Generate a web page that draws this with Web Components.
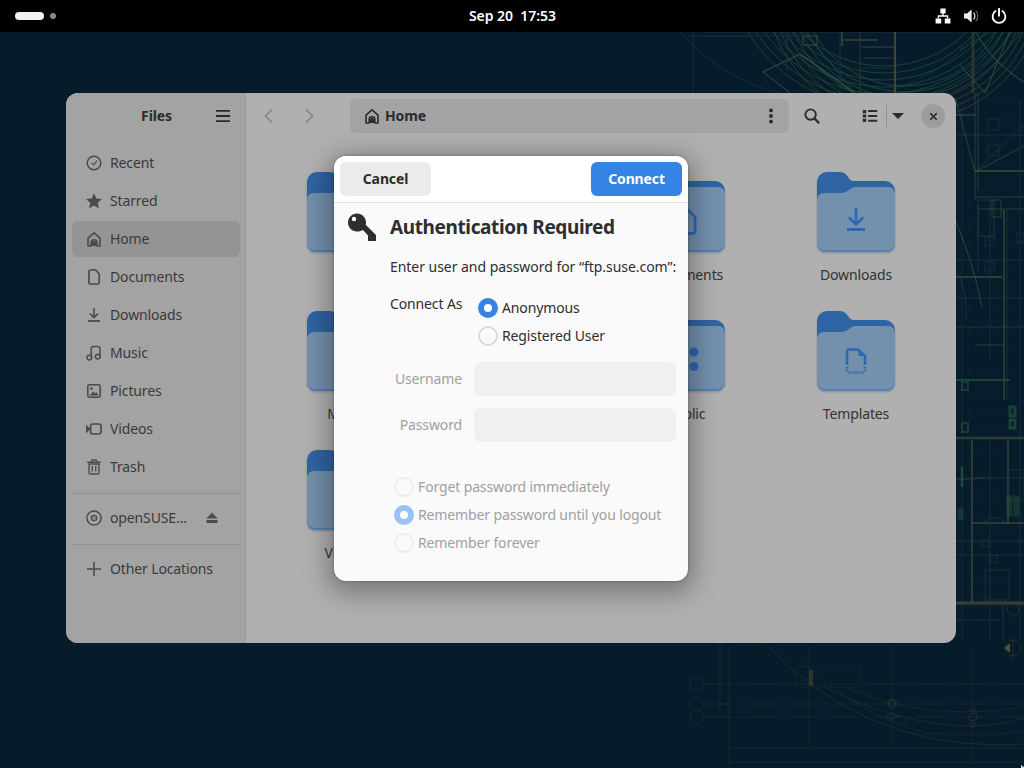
<!DOCTYPE html>
<html><head><meta charset="utf-8"><title>Files</title>
<style>
html,body{margin:0;padding:0;background:#061c2b}
body{font:14px "Noto Sans","Open Sans",sans-serif;letter-spacing:-.13px;width:1024px;height:768px;overflow:hidden}
</style></head><body>
<gnome-desk>
  <wall-paper></wall-paper>
  <top-bar></top-bar>
  <files-window>
    <side-row slot="nav" icon="recent">Recent</side-row>
    <side-row slot="nav" icon="star">Starred</side-row>
    <side-row slot="nav" icon="home" selected>Home</side-row>
    <side-row slot="nav" icon="doc">Documents</side-row>
    <side-row slot="nav" icon="down">Downloads</side-row>
    <side-row slot="nav" icon="music">Music</side-row>
    <side-row slot="nav" icon="pic">Pictures</side-row>
    <side-row slot="nav" icon="video">Videos</side-row>
    <side-row slot="nav" icon="trash">Trash</side-row>
    <side-sep slot="nav"></side-sep>
    <side-row slot="nav" icon="disc" eject>openSUSE…</side-row>
    <side-sep slot="nav"></side-sep>
    <side-row slot="nav" icon="plus">Other Locations</side-row>

    <folder-item></folder-item>
    <folder-item></folder-item>
    <folder-item emblem="doc">Documents</folder-item>
    <folder-item emblem="down">Downloads</folder-item>
    <folder-item>Music</folder-item>
    <folder-item></folder-item>
    <folder-item emblem="share">Public</folder-item>
    <folder-item emblem="tmpl">Templates</folder-item>
    <folder-item>Videos</folder-item>
  </files-window>
  <auth-dialog></auth-dialog>
</gnome-desk>
<script>
const ICONS={
recent:'<circle cx="8" cy="8" r="6.800" fill="none" stroke="currentColor" stroke-width="1.500"/><path d="M5.400 8.400 8 9.600l3-4" fill="none" stroke="currentColor" stroke-width="1.200"/>',
star:'<path d="M8 .3l2.300 5.300 5.700.5-4.300 3.800 1.300 5.600L8 12.600l-5 2.900 1.300-5.600L0 6.100l5.700-.5z" fill="currentColor"/>',
home:'<path d="M2 15V7.200L8 1.800l6 5.400V15h-3.200v-3.800c0-1.300-1.200-2.400-2.800-2.400s-2.800 1.100-2.800 2.400V15z" fill="none" stroke="currentColor" stroke-width="1.600" stroke-linejoin="round"/><path d="M6 15v-3.500c0-.9.9-1.500 2-1.500s2 .6 2 1.500V15z" fill="currentColor"/>',
doc:'<path d="M3 2.600C3 1.700 3.700 1 4.600 1H9.600L13.200 4.800V13.400c0 .9-.7 1.600-1.600 1.600H4.600C3.700 15 3 14.300 3 13.400z" fill="none" stroke="currentColor" stroke-width="1.700" stroke-linejoin="round"/>',
down:'<path d="M8 1v9M4 6.600 8 10.600 12 6.600" fill="none" stroke="currentColor" stroke-width="1.600"/><path d="M2 14h12" stroke="currentColor" stroke-width="1.800"/>',
music:'<circle cx="3.400" cy="12.600" r="2.400" fill="none" stroke="currentColor" stroke-width="1.500"/><circle cx="11.800" cy="11.600" r="2.400" fill="none" stroke="currentColor" stroke-width="1.500"/><path d="M5.200 12.600V4c0-1.600 1-2.600 2.600-2.600h4c1.400 0 2.200.8 2.200 2.200v8" fill="none" stroke="currentColor" stroke-width="1.500"/>',
pic:'<rect x="1.800" y="1.800" width="12.400" height="12.400" rx="1.600" fill="none" stroke="currentColor" stroke-width="1.600"/><circle cx="5.400" cy="5.600" r="1.400" fill="currentColor"/><path d="M3.400 12.400 7.400 8.400 9.400 10.400 10.600 9.200 12.600 12.400z" fill="currentColor"/>',
video:'<rect x="4.600" y="3" width="10.400" height="10" rx="2.200" fill="none" stroke="currentColor" stroke-width="1.700"/><path d="M0 3.600 4.400 8 0 12.400z" fill="currentColor"/>',
trash:'<path d="M3 5v8.400c0 .9.7 1.600 1.600 1.600h6.800c.9 0 1.600-.7 1.600-1.600V5z M1.200 3.200h13.600 M5.400 3V2c0-.6.4-1 1-1h3.200c.6 0 1 .4 1 1v1 M6.300 7v5.400 M9.700 7v5.400" fill="none" stroke="currentColor" stroke-width="1.400"/>',
disc:'<circle cx="8" cy="8" r="7.100" fill="none" stroke="currentColor" stroke-width="1.500"/><circle cx="8" cy="8" r="2.600" fill="none" stroke="currentColor" stroke-width="1.400"/><circle cx="8" cy="8" r=".8" fill="currentColor"/>',
plus:'<path d="M8 1v14M1 8h14" stroke="currentColor" stroke-width="1.600" fill="none"/>',
eject:'<path d="M8 1.600 14.400 8.600H1.600z" fill="currentColor"/><rect x="1.600" y="10.400" width="12.800" height="3.400" rx=".8" fill="currentColor"/>',
menu:'<path d="M1 2.800h14M1 8h14M1 13.200h14" stroke="currentColor" stroke-width="1.800"/>',
left:'<path d="M11 1.400 4.400 8l6.600 6.600" fill="none" stroke="currentColor" stroke-width="1.700"/>',
right:'<path d="M5 1.400 11.600 8 5 14.600" fill="none" stroke="currentColor" stroke-width="1.700"/>',
dots:'<circle cx="8" cy="2.400" r="1.900" fill="currentColor"/><circle cx="8" cy="8" r="1.900" fill="currentColor"/><circle cx="8" cy="13.600" r="1.900" fill="currentColor"/>',
search:'<circle cx="6.600" cy="6.600" r="5.200" fill="none" stroke="currentColor" stroke-width="1.900"/><path d="M10.400 10.400 15.200 15.200" stroke="currentColor" stroke-width="2.200"/>',
list:'<path d="M.8 2h3.400v3.200H.8zM.8 6.400h3.400v3.200H.8zM.8 10.800h3.400V14H.8z" fill="currentColor"/><path d="M6.200 3h9M6.200 8h9M6.200 12.800h9" stroke="currentColor" stroke-width="1.900"/>',
tri:'<path d="M2 5h12L8 11z" fill="currentColor"/>',
close:'<path d="M4 4l8 8M12 4l-8 8" stroke="currentColor" stroke-width="2.100" fill="none"/>',
net:'<path d="M5.400.6h5.200v4.800H5.400zM.6 10.400h5.600v5H.6zM9.800 10.400h5.600v5H9.800z" fill="currentColor"/><path d="M8 5v3M3.400 10.600V8h9.200v2.600" fill="none" stroke="currentColor" stroke-width="1.300"/>',
vol:'<path d="M1 5.400h3L8.600 1.600v12.800L4 10.600H1z" fill="currentColor"/><path d="M10.600 4.600c1.400 2 1.400 4.800 0 6.800" fill="none" stroke="currentColor" stroke-width="1.400" opacity=".85"/><path d="M13 2.800c2.200 3 2.200 7.400 0 10.400" fill="none" stroke="currentColor" stroke-width="1.400" opacity=".4"/>',
power:'<path d="M8 .8v7" stroke="currentColor" stroke-width="1.900" stroke-linecap="round"/><path d="M4.600 3.100a6.400 6.400 0 1 0 6.800 0" fill="none" stroke="currentColor" stroke-width="1.800" stroke-linecap="round"/>'
};
function mk(name,html,extra){
  const t=document.createElement('template');t.innerHTML=html;
  customElements.define(name,class extends HTMLElement{
    constructor(){super();this.attachShadow({mode:'open'}).appendChild(t.content.cloneNode(true));}
    connectedCallback(){extra&&extra.call(this,this.shadowRoot)}
  });
}
mk('sym-icon','<style>:host{display:inline-flex;flex:none;width:16px;height:16px}svg{width:100%;height:100%;display:block}</style><svg viewBox="0 0 16 16"></svg>',function(r){r.querySelector('svg').innerHTML=ICONS[this.getAttribute('name')]||''});

mk('gnome-desk','<style>:host{display:block;position:relative;width:1024px;height:768px;overflow:hidden;background:#061c2b}</style><slot></slot>');

mk('wall-paper',`<style>:host{position:absolute;inset:0;display:block}svg{display:block;filter:blur(.45px)}</style>
<svg width="1024" height="768" viewBox="0 0 1024 768" fill="none"></svg>`,function(r){
  const ol='#4a4d35',gr='#2c5a40',te='#1a4248',dim='#1a3340',fa='#24353a';
  let s='';
  const L=(a,b,c,d,col,w=1,o=1,dash)=>{s+=`<path d="M${a} ${b}L${c} ${d}" stroke="${col}" stroke-width="${w}" opacity="${o*.85}"${dash?` stroke-dasharray="${dash}"`:''}/>`};
  const C=(x,y,R,col,w=1,o=1)=>{s+=`<circle cx="${x}" cy="${y}" r="${R}" stroke="${col}" stroke-width="${w}" opacity="${o*.85}"/>`};
  const P=(d,col,w=1,o=1)=>{s+=`<path d="${d}" stroke="${col}" stroke-width="${w}" opacity="${o*.85}"/>`};
  const B=(x,y,W,H,col,w=1,o=1)=>{s+=`<rect x="${x}" y="${y}" width="${W}" height="${H}" stroke="${col}" stroke-width="${w}" opacity="${o*.85}"/>`};
  // top arcs
  for(let i=0;i<7;i++)C(905,-18,104+i*6,i<3?gr:ol,.9,.85);
  for(let i=0;i<7;i++)C(884,-52,118+i*7,gr,.9,.8);
  C(830,-100,200,te,1,.7);C(1090,-30,130,gr,1.2,.8);
  L(693,32,693,93,dim);L(700,32,1024,32,fa);L(689,36,800,36,dim);
  L(763,72,800,54,gr,1.2,1);L(800,54,855,93,gr,1.6,1);L(763,72,790,93,gr);
  L(805,32,855,93,te);L(787,70,787,32,dim);L(840,32,840,93,dim);
  L(843,40,878,40,ol,1.5,.9);L(842,32,842,46,ol,2,.8);L(895,32,895,93,ol,2.2,1);L(860,32,860,93,ol,1,.6);
  L(862,47,895,47,ol);L(864,58,895,58,ol,1,.8);L(860,68,895,68,dim);
  L(973,32,973,93,ol,3,.55);L(960,65,985,93,gr);L(985,93,1010,32,gr);L(960,50,990,32,gr,1,.6);
  B(803,36,14,9,ol,1.5,.7);
  // right strip
  L(975,93,975,200,ol,1,.7);L(978,93,978,190,gr,1,.7);L(1004,210,1004,400,gr,2,.7);L(1007,210,1007,400,ol,1,.5);
  L(956,115,975,115,ol,1.5,.8);L(975,171,1024,171,ol,2,.8);L(976,197,1024,197,gr,1,.8);L(978,209,1024,209,gr,1,.8);
  L(956,277,1002,277,ol,2,.8);L(956,327,1024,327,gr,1,.55);L(956,298,1024,298,dim);L(956,260,1024,260,dim);L(956,135,1024,135,dim);
  L(956,100,975,172,gr,1,.8);L(975,172,1024,146,gr,1,.8);L(1024,125,975,172,gr,1,.5);
  L(978,205,978,272,dim);L(990,200,990,360,dim);L(1020,100,1020,640,dim);L(962,100,962,640,fa,1,.7);
  P('M956 222 Q974 265 982 307',gr,1,.9);P('M956 270Q968 290 966 320',te,1,.9);
  B(988,119,11,11,dim,1,.9);B(988,145,11,11,dim,1,.9);B(985,237,9,9,dim,1,.9);B(1017,233,7,9,dim);B(985,262,9,9,dim);
  B(978,200,16,36,gr,1,.55);B(992,200,9,17,ol,1,.8);
  L(975,345,1004,345,gr,1,.7);L(956,380,1010,380,gr,2,.7);
  B(962,382,6,8,gr,2,.6);B(962,423,6,9,gr,2,.6);B(1010,407,5,9,gr,3,.7);B(1010,420,5,8,gr,3,.7);
  L(956,438,1024,438,ol,2.5,.8);L(972,440,972,603,ol,2,.7);L(1008,440,1008,523,ol,2,.7);L(972,523,1024,523,ol,2,.7);
  L(956,603,1024,603,ol,3.5,.8);L(990,440,990,640,dim);P('M983 523a14 14 0 0 1 22 0',gr,1,.5);
  B(1009,470,15,30,dim);B(982,540,7,7,ol,1,.5);B(990,555,7,7,ol,1,.5);B(985,570,24,30,dim);
  L(962,467,962,487,gr,2.5,.8);L(956,478,1024,478,fa);L(956,541,1024,541,fa);L(956,555,1024,555,dim);L(956,480,985,478,gr,1,.6);
  B(1008,497,3,18,gr,3,.5);B(1015,497,3,18,gr,3,.5);B(959,510,3,8,gr,3,.5);
  C(1013,609,6,ol,1,.5);L(956,620,1000,620,dim);L(1003,603,1003,640,dim);
  for(let y=100;y<630;y+=13)L(956,y,1024,y,dim,.6,.35);
  for(let x=960;x<1024;x+=9)L(x,95,x,640,dim,.6,.3);
  // bottom drawing
  const o1='#2a3532';
  [684,704,717].forEach(y=>{L(704,y,1024,y,o1,.8,.8,'30 3 6 3');C(697,y,7,o1,.8,.8)});
  L(729,645,729,765,o1,.8,.8);L(720,645,720,717,o1,.8,.8);L(809,645,809,748,o1,.8,.7);L(892,645,892,748,o1,.8,.6);L(973,645,973,765,o1,.8,.6);
  L(729,748,1024,748,o1,.8,.8);L(729,762,1024,762,o1,.8,.8);L(725,704,729,704,o1);
  P('M765 643Q860 745 1000 745L1024 744',o1,.9,.9);P('M824 687Q900 725 970 726Q1000 726 1024 718',o1,.9,.8);P('M845 687Q900 712 965 712Q1000 712 1024 706',o1,.9,.7);P('M800 660Q860 715 924 733Q985 738 1024 731',o1,.9,.6);
  B(796,667,65,20,o1,.8,.6);L(811,670,811,686,'#41432f',4,.8);
  P('M892 698l-5 4 5 4 5-4z M892 712l-5 4 5 4 5-4z',o1,1,.8);C(892,704,4,o1);C(973,717,4,o1);P('M973 706l-4 5h8z M973 728l-4-5h8z',o1,1,.8);
  s+='<path d="M1004 648l6-5v10z" fill="#50503a"/>';C(1013,648,8,o1,1,.8);P('M1013 638v20',o1);
  s+='<path d="M1021 765l3 2v1h-3z" fill="#ddd"/>';
  r.querySelector('svg').innerHTML=s;
});

mk('top-bar',`<style>
:host{position:absolute;left:0;top:0;right:0;height:32px;background:#000;color:#fff;display:flex;align-items:center;padding:0 17px 0 15px;box-sizing:border-box}
.left{display:flex;align-items:center;gap:6px;flex:1}
.pill{width:29px;height:8px;border-radius:4px;background:#f2f2f2}
.dot{width:6px;height:6px;border-radius:50%;background:#8a8a8a}
.clock{font-weight:600;font-size:14px;letter-spacing:-.02px;white-space:pre;position:absolute;left:1px;right:0;text-align:center;pointer-events:none;margin-top:-2px}
.right{display:flex;align-items:center;gap:12px}
sym-icon[name=vol]{color:#eee}
</style>
<div class="left"><span class="pill"></span><span class="dot"></span></div>
<div class="clock">Sep 20  17:53</div>
<div class="right"><sym-icon name="net"></sym-icon><sym-icon name="vol"></sym-icon><sym-icon name="power"></sym-icon></div>`);

mk('side-row',`<style>
:host{display:flex;align-items:center;height:36px;border-radius:6px;padding:0 21px 0 14px;gap:8px;color:#3a3a3a}
:host([selected]){background:#949494}
sym-icon{color:#4b4b4b}
.t{flex:1;white-space:nowrap;margin-top:-2px}
.e{display:none;color:#4b4b4b;width:14px;height:14px;margin-top:-1px}
:host([eject]) .e{display:inline-flex}
</style><sym-icon class="m"></sym-icon><span class="t"><slot></slot></span><sym-icon class="e" name="eject"></sym-icon>`,function(r){
  r.querySelector('.m').shadowRoot.querySelector('svg').innerHTML=ICONS[this.getAttribute('icon')]||'';
});

mk('side-sep','<style>:host{display:block;height:1px;background:#909090;margin:6px 0 4px}</style>');

mk('folder-item',`<style>
:host{display:flex;flex-direction:column;align-items:center;height:139px;color:#333}
.f{position:relative;width:78px;height:80px;filter:drop-shadow(0 1px 1px rgba(0,0,0,.2))}
svg{display:block}
.l{margin-top:13px;line-height:20px;white-space:nowrap}
</style><div class="f"><svg width="78" height="80" viewBox="0 0 78 80">
<path d="M0 10A10 10 0 0 1 10 0H22Q28 0 31 5Q33 9 37 9H68A10 10 0 0 1 78 19V40H0Z" fill="#2f64a4"/>
<path d="M0 28A7 7 0 0 1 7 21H25Q29 21 32 18Q35 15 39 15H71A7 7 0 0 1 78 22V72A8 8 0 0 1 70 80H8A8 8 0 0 1 0 72Z" fill="#5580b6"/>
<path d="M0 28A7 7 0 0 1 7 21H25Q29 21 32 18Q35 15 39 15H71A7 7 0 0 1 78 22V70A8 8 0 0 1 70 78H8A8 8 0 0 1 0 70Z" fill="#7390ad"/>
<g class="e" fill="none" stroke="#2f68ae"></g></svg></div><div class="l"><slot></slot></div>`,function(r){
  const m={
   down:'<path d="M39 36V52M32 45.500 39 52.500 46 45.500" stroke-width="2.600"/><path d="M30 57.500H48" stroke-width="3"/>',
   doc:'<path d="M32 38.500H41.500L48 45V59A2.500 2.500 0 0 1 45.500 61.500H32.500A2.500 2.500 0 0 1 30 59V41A2.500 2.500 0 0 1 32.500 38.500Z" stroke-width="2.800"/>',
   share:'<g fill="#2f68ae" stroke="none"><circle cx="47" cy="41" r="4.500"/><circle cx="47" cy="55.500" r="4.500"/><circle cx="32" cy="48" r="4.500"/></g>',
   tmpl:'<path d="M30 54V41A2.500 2.500 0 0 1 32.500 38.500H41L48 45V54" stroke-width="2.600"/><path d="M30 56V59A2.500 2.500 0 0 0 32.500 61.500H45.500A2.500 2.500 0 0 0 48 59V56" stroke-width="2.600" stroke-dasharray="1.500 1.300"/><path d="M41.500 39 47.500 45H41.500Z" fill="#2f68ae" stroke="none"/>'
  };
  r.querySelector('.e').innerHTML=m[this.getAttribute('emblem')]||'';
});

mk('files-window',`<style>
:host{position:absolute;left:66px;top:93px;width:890px;height:550px;display:flex;border-radius:12px;overflow:hidden;background:#b0b0b0;color:#333}
.side{width:179px;flex:none;background:#a3a3a3;border-right:1px solid #999;display:flex;flex-direction:column}
.shead{height:46px;display:flex;align-items:center;position:relative;flex:none}
.shead b{flex:1;text-align:center;font-weight:700;color:#2b2b2b;margin-top:-2px;padding-left:2px}
.shead sym-icon{color:#2b2b2b;position:absolute;right:14px;top:15px}
.nav{padding:6px 5px 0 6px;display:flex;flex-direction:column;gap:2px}
.main{flex:1;display:flex;flex-direction:column;min-width:0}
.bar{height:46px;flex:none;padding:6px 11px 6px 6px;box-sizing:border-box;display:flex;align-items:center;color:#2b2b2b}
.btn{width:34px;height:34px;display:flex;align-items:center;justify-content:center;flex:none}
.nv{color:#868686}
.nv+.nv{margin-left:6px}
.path{margin-left:24px;width:439px;height:34px;border-radius:6px;background:#a3a3a3;display:flex;align-items:center;padding:0 10px 0 14px;box-sizing:border-box;font-weight:700;gap:5px}
.path span{flex:1;margin-top:-2px}
.s{margin-left:6px}
.v{margin-left:24px;position:relative}
.v i{position:absolute;right:0;top:6px;bottom:6px;width:1px;background:#8f8f8f}
.d{width:22px}
.x{margin-left:12px;width:24px;height:24px;border-radius:50%;background:#9c9c9c;display:flex;align-items:center;justify-content:center}
.x sym-icon{width:13px;height:13px}
.grid{display:grid;grid-template-columns:repeat(4,170px);padding:33px 0 0 15px;align-content:start}
</style>
<div class="side"><div class="shead"><b>Files</b><sym-icon name="menu"></sym-icon></div><div class="nav"><slot name="nav"></slot></div></div>
<div class="main">
 <div class="bar">
  <div class="btn nv"><sym-icon name="left"></sym-icon></div><div class="btn nv"><sym-icon name="right"></sym-icon></div>
  <div class="path"><sym-icon name="home"></sym-icon><span>Home</span><sym-icon name="dots"></sym-icon></div>
  <div class="btn s"><sym-icon name="search"></sym-icon></div>
  <div class="btn v"><sym-icon name="list"></sym-icon><i></i></div>
  <div class="btn d"><sym-icon name="tri"></sym-icon></div>
  <div class="x"><sym-icon name="close"></sym-icon></div>
 </div>
 <div class="grid"><slot></slot></div>
</div>`);

mk('radio-opt',`<style>
:host{display:flex;align-items:center;gap:4px;height:28px;color:inherit;white-space:nowrap}
.r{width:20px;height:20px;border-radius:50%;border:2px solid #dadada;box-sizing:border-box;display:flex;align-items:center;justify-content:center;flex:none}
.x{margin-top:-2px}
:host([checked]) .r{background:#3584e4;border-color:#3584e4}
:host([checked]) .r::after{content:"";width:8px;height:8px;border-radius:50%;background:#fff}
:host([off]) .r{border-color:#ececec}
:host([off][checked]) .r{background:#9ac2f1;border-color:#9ac2f1}
</style><span class="r"></span><span class="x"><slot></slot></span>`);

mk('auth-dialog',`<style>
:host{position:absolute;left:334px;top:156px;width:354px;height:425px;border-radius:12px;background:#fafafa;color:#2e2e2e;box-shadow:0 6px 26px 6px rgba(0,0,0,.32),0 0 3px rgba(0,0,0,.3);display:flex;flex-direction:column;overflow:hidden}
header{height:46px;flex:none;background:#fff;border-bottom:1px solid #e2e2e2;display:flex;justify-content:space-between;align-items:center;padding:0 6px}
.b{width:91px;height:34px;border-radius:6px;background:#ebebeb;display:flex;align-items:center;justify-content:center;font-weight:700;padding-bottom:2px;box-sizing:border-box}
.b.p{background:#3584e4;color:#fff}
main{padding:11px 12px 0 14px;display:flex;flex-direction:column}
.title{display:flex;height:28px;align-items:center}
.title svg{width:28px;height:28px;flex:none;margin:-1px 14px 1px 0}
.title h1{margin:-2px 0 0;font-size:19px;letter-spacing:-.38px;font-weight:700;white-space:nowrap}
.intro{margin:15px 0 0 42px;line-height:20px;white-space:nowrap;letter-spacing:-.04px}
.as{display:flex;margin:17px 0 0 42px}
.as>span{width:88px;line-height:20px}
.rs{display:flex;flex-direction:column}
.f{display:flex;align-items:center;gap:12px;color:#a0a0a0}
.f label{width:114px;text-align:right;margin-top:-2px}
.f div{width:202px;height:34px;border-radius:6px;background:#f0f0f0}
.fs{margin-top:12px;display:flex;flex-direction:column;gap:12px}
.pw{margin:31px 0 0 46px;color:#a0a0a0;display:flex;flex-direction:column}
</style>
<header><div class="b">Cancel</div><div class="b p">Connect</div></header>
<main>
 <div class="title"><svg viewBox="0 0 28 28"><path fill="#2e2e2e" fill-rule="evenodd" d="M9 .5C14 .5 18 4.500 18 9.500C18 10.300 17.900 11 17.700 11.700L28 22V28H20V22.500L15 17C13.500 17.800 11.500 18.500 9 18.500C4 18.500 0 14.500 0 9.500C0 4.500 4 .5 9 .5ZM6 3.800A2.200 2.200 0 1 0 6 8.200A2.200 2.200 0 1 0 6 3.800Z"/></svg><h1>Authentication Required</h1></div>
 <p class="intro">Enter user and password for “ftp.suse.com”:</p>
 <div class="as"><span>Connect As</span><div class="rs"><radio-opt checked>Anonymous</radio-opt><radio-opt>Registered User</radio-opt></div></div>
 <div class="fs"><div class="f"><label>Username</label><div></div></div><div class="f"><label>Password</label><div></div></div></div>
 <div class="pw"><radio-opt off>Forget password immediately</radio-opt><radio-opt off checked>Remember password until you logout</radio-opt><radio-opt off>Remember forever</radio-opt></div>
</main>`);
</script>
</body></html>
